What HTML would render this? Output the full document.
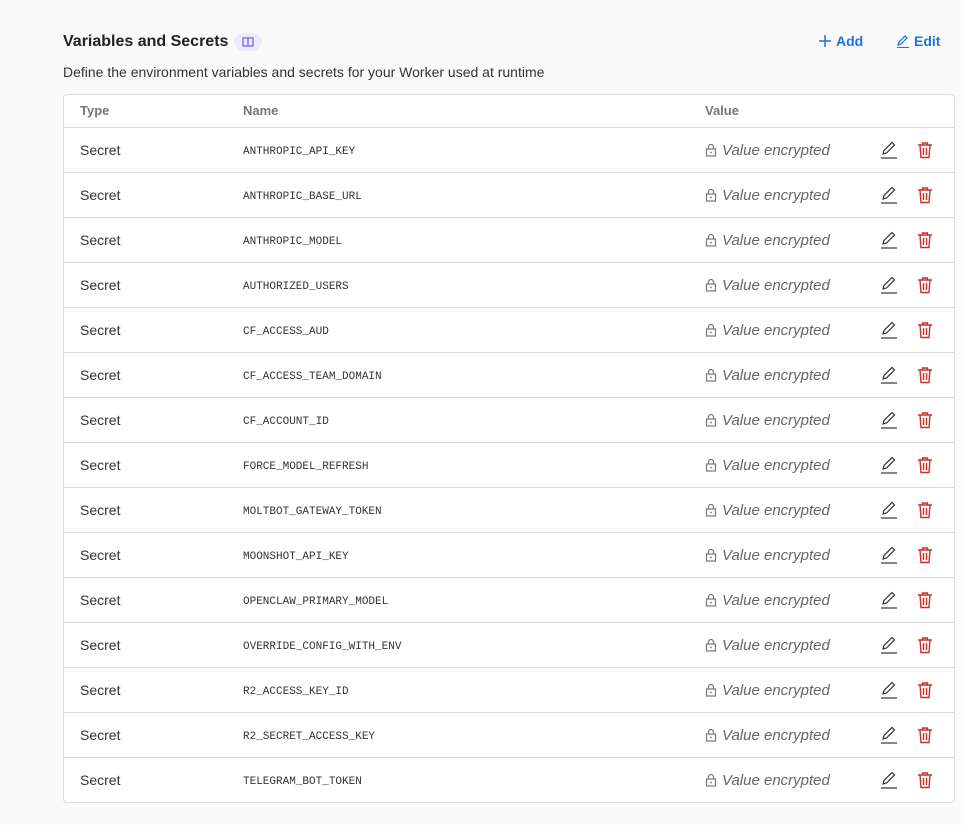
<!DOCTYPE html>
<html><head><meta charset="utf-8"><style>
body{margin:0;background:#fafafa;font-family:"Liberation Sans",sans-serif;width:964px;height:825px;overflow:hidden;position:relative;color:#333}
.title{position:absolute;left:63px;top:33px;font-size:16px;font-weight:bold;color:#222}
.badge{position:absolute;left:234px;top:33px;width:28px;height:18px;border-radius:9px;background:#ecebfb}
.desc{position:absolute;left:63px;top:64px;font-size:14px;color:#333}
.act{position:absolute;top:33px;color:#1a73e8;font-size:14px;font-weight:bold;display:flex;align-items:center;gap:4px}
.tbl{position:absolute;left:63px;top:94px;width:890px;height:707px;background:#fff;border:1px solid #dcdcdc;border-radius:4px;overflow:hidden}
.row{position:relative;height:44px;border-top:1px solid #dcdcdc}
.hdr{height:32px;border-top:none}
.c{position:absolute;top:0;line-height:44px}
.hdr .c{line-height:32px;font-size:13px;font-weight:bold;color:#777}
.t{left:16px;font-size:14px;color:#333}
.n{left:179px;top:2px;font-family:"Liberation Mono",monospace;font-size:11px;color:#333}
.v{left:641px;top:1px;font-size:15px;font-style:italic;color:#666;white-space:nowrap}
.v svg{vertical-align:-2px;margin-right:5px}
.ic{position:absolute;top:13px}
</style></head><body>
<div class="title">Variables and Secrets</div>
<div class="badge"><svg width="28" height="18" viewBox="0 0 28 18"><rect x="9" y="5" width="10" height="8" fill="none" stroke="#6b5ce7" stroke-width="1.2"/><line x1="14" y1="5" x2="14" y2="13" stroke="#6b5ce7" stroke-width="1.2"/></svg></div>
<div class="desc">Define the environment variables and secrets for your Worker used at runtime</div>
<div class="act" style="left:818px"><svg width="14" height="14"><path d="M7 1v12M1 7h12" stroke="#1a73e8" stroke-width="1.5"/></svg>Add</div>
<div class="act" style="left:896px"><svg width="14" height="14"><path d="M2 11l1-3 6-6 2 2-6 6z M1 13.5h12" fill="none" stroke="#1a73e8" stroke-width="1.2"/></svg>Edit</div>
<div class="tbl">
<div class="row hdr"><div class="c t">Type</div><div class="c n" style="top:0;font-family:'Liberation Sans',sans-serif;font-size:13px">Name</div><div class="c v" style="top:0;font-style:normal;font-size:13px;color:#777">Value</div></div>
<div id="rows"></div>
</div>
<script>
var names=["ANTHROPIC_API_KEY","ANTHROPIC_BASE_URL","ANTHROPIC_MODEL","AUTHORIZED_USERS","CF_ACCESS_AUD","CF_ACCESS_TEAM_DOMAIN","CF_ACCOUNT_ID","FORCE_MODEL_REFRESH","MOLTBOT_GATEWAY_TOKEN","MOONSHOT_API_KEY","OPENCLAW_PRIMARY_MODEL","OVERRIDE_CONFIG_WITH_ENV","R2_ACCESS_KEY_ID","R2_SECRET_ACCESS_KEY","TELEGRAM_BOT_TOKEN"];
var h="";names.forEach(function(n){h+='<div class="row"><div class="c t">Secret</div><div class="c n">'+n+'</div><div class="c v"><svg width="12" height="14" viewBox="0 0 12 14"><rect x="1.5" y="6" width="9" height="7" fill="none" stroke="#777" stroke-width="1.2"/><path d="M3.5 6V4a2.5 2.5 0 015 0v2" fill="none" stroke="#777" stroke-width="1.2"/><circle cx="6" cy="9.5" r="0.9" fill="#777"/></svg>Value encrypted</div>'+
'<svg class="ic" style="left:816px" width="18" height="18" viewBox="0 0 18 18"><path d="M3 13l1-3.5 8-8 2.5 2.5-8 8z" fill="none" stroke="#333" stroke-width="1.2"/><path d="M1 17h16" stroke="#333" stroke-width="1.2"/></svg>'+
'<svg class="ic" style="left:853px" width="16" height="18" viewBox="0 0 16 18"><path d="M1 4h14M5.5 4V2h5v2M3 4l1 12.5h8L13 4M6.5 7v7M9.5 7v7" fill="none" stroke="#c9302c" stroke-width="1.4"/></svg></div>'});
document.getElementById("rows").innerHTML=h;
</script>
</body></html>
